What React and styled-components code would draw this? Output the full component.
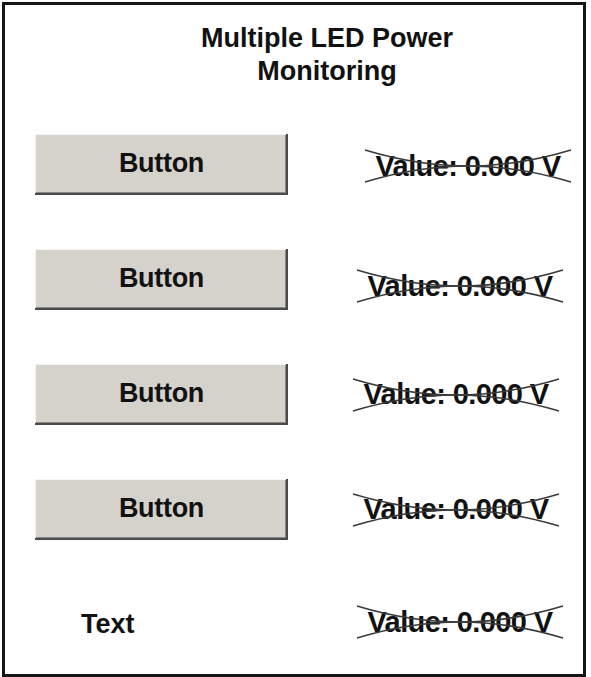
import React from "react";
import styled, { createGlobalStyle } from "styled-components";

const GlobalStyle = createGlobalStyle`
  html, body {
    margin: 0;
    padding: 0;
    background: #fff;
  }
  body {
    font-family: "Liberation Sans", Arial, sans-serif;
    color: #111;
  }
`;

const Frame = styled.div`
  box-sizing: border-box;
  margin: 2px 0 0 2px;
  width: 584px;
  height: 675px;
  border: 3px solid #151515;
  background: #fff;
  display: flex;
  flex-direction: column;
`;

const Title = styled.h1`
  margin: 0;
  padding: 17px 0 0 66px;
  font-size: 27px;
  line-height: 33px;
  font-weight: bold;
  text-align: center;
  color: #111;
`;

const Rows = styled.div`
  margin-top: 46px;
  display: flex;
  flex-direction: column;
  gap: 54px;
`;

const Row = styled.div`
  display: grid;
  grid-template-columns: 253px 1fr;
  align-items: center;
  padding-left: 30px;
  height: 61px;
`;

const PanelButton = styled.button`
  box-sizing: border-box;
  width: 253px;
  height: 61px;
  padding: 0 0 2px;
  border: none;
  background: #d5d2cc;
  box-shadow: inset -2px -2px #4a4a4a, inset 1px 1px #f4f4f4,
    inset -3px -3px #8a8a8a;
  font-family: "Liberation Sans", Arial, sans-serif;
  font-size: 27px;
  font-weight: bold;
  letter-spacing: -0.3px;
  color: #111;
  cursor: pointer;
`;

const Label = styled.span`
  padding-left: 46px;
  font-size: 27px;
  font-weight: bold;
  color: #111;
`;

const ValueBox = styled.div`
  position: relative;
  justify-self: start;
  margin-left: ${(p) => p.$shift}px;
  margin-top: ${(p) => p.$drop}px;
  width: 210px;
  height: 38px;
  display: flex;
  align-items: center;
  justify-content: center;
  font-size: 29px;
  letter-spacing: -0.6px;
  font-weight: bold;
  color: #111;
  white-space: nowrap;
`;

const Cross = styled.svg`
  position: absolute;
  left: 0;
  top: 0;
  width: 210px;
  height: 38px;
  pointer-events: none;
`;

function Value({ shift = 67, drop = 0 }) {
  return (
    <ValueBox $shift={shift} $drop={drop}>
      Value: 0.000 V
      <Cross viewBox="0 0 210 38">
        <path
          d="M2 3 Q 55 19 105 19 T 208 35"
          fill="none"
          stroke="#3a3a3a"
          strokeWidth="1.6"
        />
        <path
          d="M2 35 Q 55 19 105 19 T 208 3"
          fill="none"
          stroke="#3a3a3a"
          strokeWidth="1.6"
        />
      </Cross>
    </ValueBox>
  );
}

const rows = [
  { shift: 75, drop: 3 },
  { shift: 67, drop: 13 },
  { shift: 63, drop: 0 },
  { shift: 63, drop: 0 },
];

export default function App() {
  return (
    <>
      <GlobalStyle />
      <Frame>
        <Title>
          Multiple LED Power
          <br />
          Monitoring
        </Title>
        <Rows>
          {rows.map((r, i) => (
            <Row key={i}>
              <PanelButton>Button</PanelButton>
              <Value shift={r.shift} drop={r.drop} />
            </Row>
          ))}
          <Row>
            <Label>Text</Label>
            <Value shift={67} drop={-5} />
          </Row>
        </Rows>
      </Frame>
    </>
  );
}
